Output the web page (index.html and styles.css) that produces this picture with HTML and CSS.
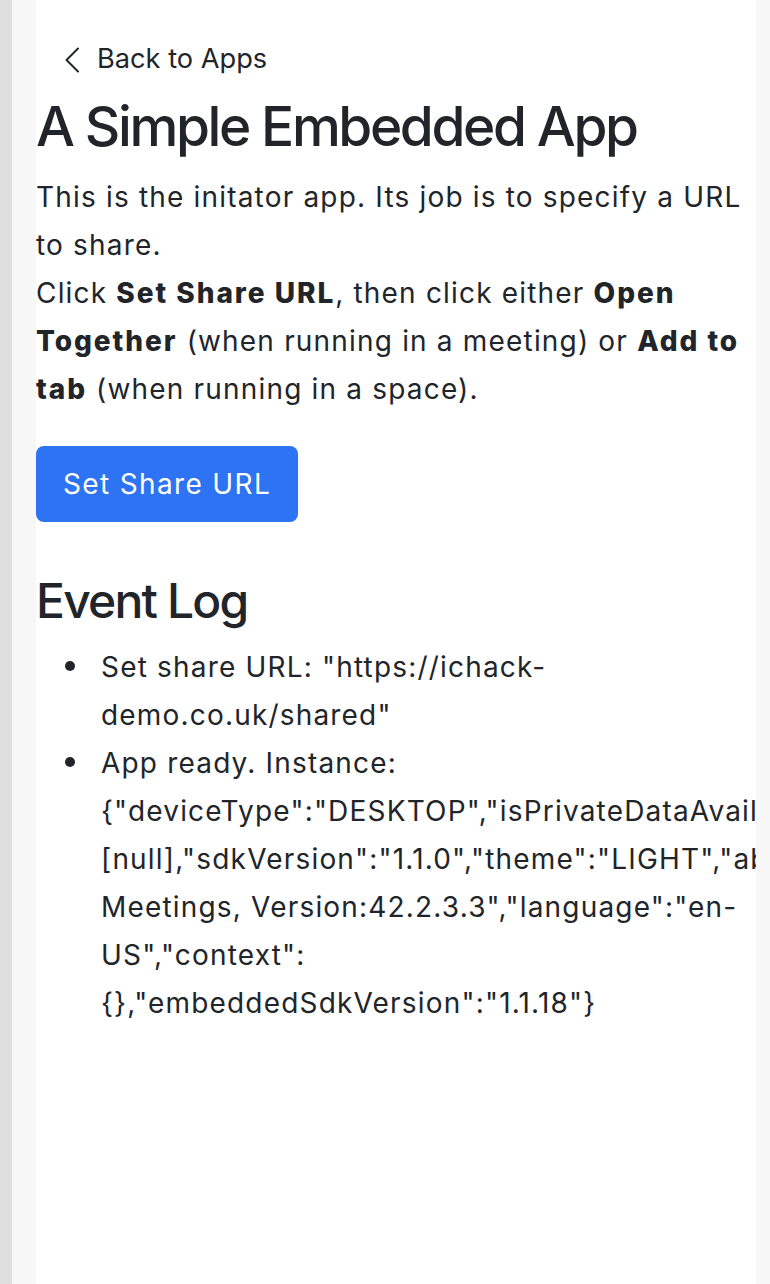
FILE: index.html
```html
<!DOCTYPE html>
<html lang="en">
<head>
<meta charset="utf-8">
<title>A Simple Embedded App</title>
<link rel="stylesheet" href="styles.css">
</head>
<body>
<div class="frame">
  <div class="rail"></div>
  <div class="gutter"></div>
  <main class="panel">
    <a class="back" href="#">
      <svg class="chev" width="16" height="26" viewBox="0 0 16 26" aria-hidden="true">
        <path d="M14 1.5 L2.5 13 L14 24.5" fill="none" stroke="#212529" stroke-width="2" stroke-linecap="round" stroke-linejoin="round"/>
      </svg>
      <span>Back to Apps</span>
    </a>
    <h1 class="title">A Simple Embedded App</h1>
    <p class="intro">This is the initator app. Its job is to specify a URL to share.<br>Click <b>Set Share URL</b>, then click either <b>Open Together</b> (when running in a meeting) or <b>Add to tab</b> (when running in a space).</p>
    <button class="btn" type="button">Set Share URL</button>
    <h2 class="subtitle">Event Log</h2>
    <ul class="log">
      <li><span class="entry">Set share URL: "https://ichack-demo.co.uk/shared"</span></li>
      <li><span class="entry">App ready. Instance: {"deviceType":"DESKTOP","isPrivateDataAvailable":false,"displayContext":[null],"sdkVersion":"1.1.0","theme":"LIGHT","about":"Webex Meetings, Version:42.2.3.3","language":"en-US","context":{},"embeddedSdkVersion":"1.1.18"}</span></li>
    </ul>
  </main>
  <div class="gutter-r"></div>
</div>
</body>
</html>
```

FILE: styles.css
```css
html, body {
  margin: 0;
  padding: 0;
}
body {
  background: #f7f7f7;
  font-family: Inter, "Noto Sans", sans-serif;
  color: #212529;
  font-size: 28px;
  line-height: 48px;
  letter-spacing: 1.18px;
}
.frame {
  display: flex;
  height: 1284px;
}
.rail {
  width: 12px;
  flex: none;
  background: #dedede;
}
.gutter {
  width: 24px;
  flex: none;
  background: #f7f7f7;
}
.gutter-r {
  width: 14px;
  flex: none;
  background: #f7f7f7;
}
.panel {
  width: 720px;
  flex: none;
  background: #ffffff;
  overflow: hidden;
  padding-top: 35px;
  box-sizing: border-box;
}
.back {
  display: flex;
  align-items: center;
  gap: 17px;
  padding-left: 28px;
  color: #212529;
  text-decoration: none;
  height: 48px;
  font-size: 27.2px;
  letter-spacing: 0;
}
.chev {
  display: block;
  margin-top: 1px;
}
.title {
  margin: 10px 0 0;
  font-size: 55px;
  line-height: 67px;
  font-weight: 550;
  letter-spacing: -2.4px;
}
.intro {
  margin: 13px 0 0;
}
.intro b {
  font-weight: 800;
  letter-spacing: 1.95px;
}
.btn {
  display: block;
  margin-top: 33px;
  height: 76px;
  padding: 0 27px;
  border: 0;
  border-radius: 8px;
  background: #2e73f3;
  color: #ffffff;
  font-family: inherit;
  font-size: 28px;
  line-height: 48px;
  letter-spacing: 1.35px;
}
.subtitle {
  margin: 50px 0 0;
  font-size: 48px;
  line-height: 58px;
  font-weight: 500;
  letter-spacing: -1.8px;
}
.log {
  margin: 13px 0 0;
  padding-left: 65px;
  list-style: none;
}
.log li {
  display: flex;
}
.log li::before {
  content: "";
  flex: none;
  width: 10px;
  height: 10px;
  border-radius: 50%;
  background: #212529;
  margin: 18px 26px 0 -36px;
}
.entry {
  min-width: 0;
  flex: 1 1 auto;
}
```
